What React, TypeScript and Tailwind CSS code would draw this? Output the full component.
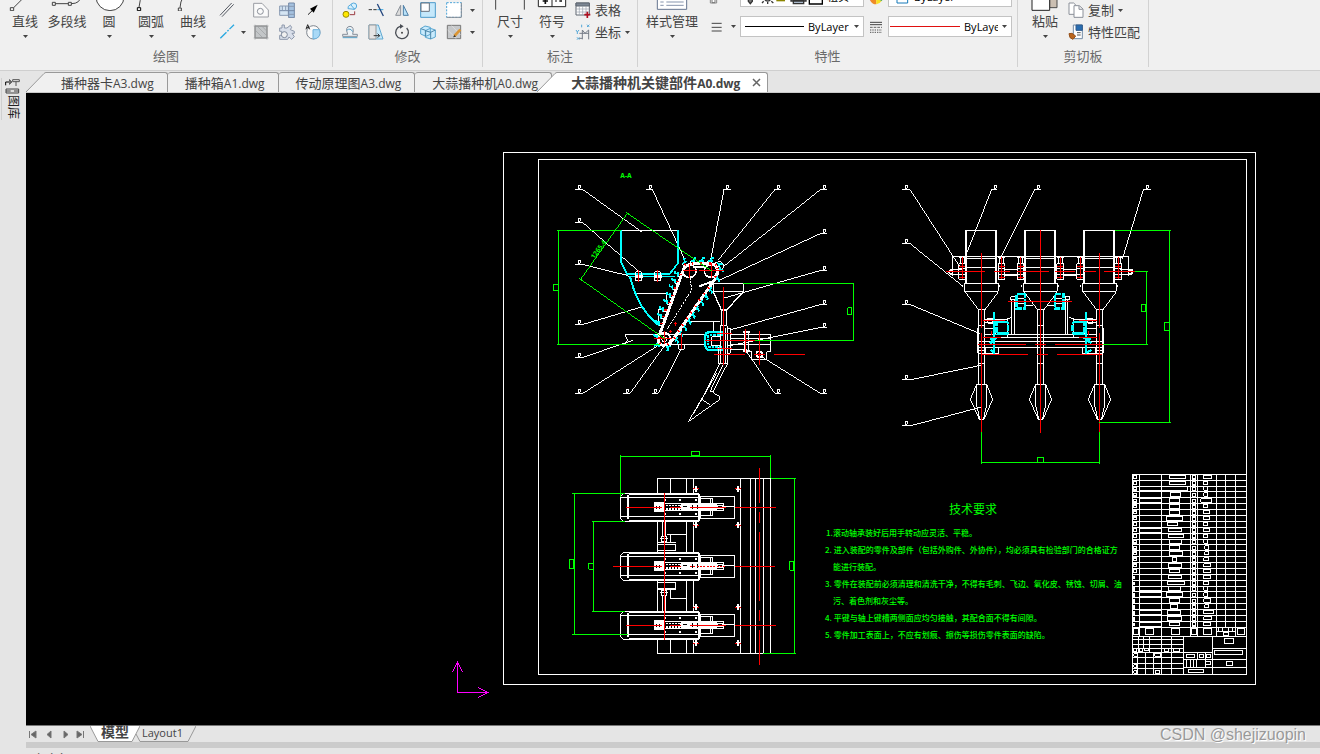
import React from 'react';

type Leader = [number, number, number, number, number];

const font = 'font-["Open_Sans","Noto_Sans_CJK_SC",sans-serif]';

function Caret() {
  return (
    <svg viewBox="0 0 5 3" className="h-[3px] w-[5px] shrink-0 fill-[#444]">
      <path d="M0 0H5L2.5 3Z" />
    </svg>
  );
}

function Icon({ children }: { children: React.ReactNode }) {
  return (
    <svg viewBox="0 0 48 48" className="h-4 w-4 shrink-0" fill="none" stroke="#5f6670" strokeWidth="3">
      {children}
    </svg>
  );
}

function IconButton({ label, children }: { label: string; children: React.ReactNode }) {
  return (
    <button aria-label={label} className="flex h-[22px] w-[26px] items-center justify-center">
      <Icon>{children}</Icon>
    </button>
  );
}

function LargeButton({ label, wide, children }: { label: string; wide?: boolean; children: React.ReactNode }) {
  return (
    <button className={`flex flex-col items-center pb-[9px] ${wide ? 'w-[68px]' : 'w-[42px]'}`}>
      <svg viewBox="0 0 96 96" className="h-8 w-8 shrink-0" fill="none" stroke="#444" strokeWidth="3">
        {children}
      </svg>
      <span className="mt-px whitespace-nowrap leading-[18px]">{label}</span>
      <span className="mt-[5px] flex h-[3px]">{label !== '多段线' && <Caret />}</span>
    </button>
  );
}

function TextButton({ label, caret, children }: { label: string; caret?: boolean; children: React.ReactNode }) {
  return (
    <button className="flex h-[22px] items-center whitespace-nowrap">
      <span className="mr-[2px] flex w-5 justify-center">
        <Icon>{children}</Icon>
      </span>
      <span className="leading-5">{label}</span>
      {caret && (
        <span className="ml-1 flex">
          <Caret />
        </span>
      )}
    </button>
  );
}

function MoreButton({ label }: { label: string }) {
  return (
    <button aria-label={label} className="flex h-[22px] w-[10px] items-center justify-center">
      <Caret />
    </button>
  );
}

function Group({ title, children }: { title: string; children: React.ReactNode }) {
  return (
    <section className="flex shrink-0 flex-col border-r border-[#d2d2d2]">
      <div className="flex h-[68px] items-end">{children}</div>
      <h2 className="h-5 text-center leading-[18px] text-[#6a6a6a]">{title}</h2>
    </section>
  );
}

function Combo({ label, value, children }: { label: string; value: string; children: React.ReactNode }) {
  return (
    <div className="flex h-[21px] w-[124px] items-center overflow-hidden border border-[#c3c3c3] bg-white pr-1">
      {children}
      <select aria-label={label} className="mr-1 min-w-0 flex-1 appearance-none overflow-hidden text-clip pt-px text-[11px] text-black">
        <option>{value}</option>
      </select>
      <Caret />
    </div>
  );
}

function Ribbon() {
  return (
    <header className="flex h-[71px] shrink-0 items-end overflow-hidden border-b border-[#cfcfcf] bg-[#f0f0f0] pb-[3px] text-[13px]">
      <Group title="绘图">
        <div className="flex pl-1">
          <LargeButton label="直线">
            <path d="M4 86h10v9H4ZM14 86L60 40" />
          </LargeButton>
          <LargeButton label="多段线">
            <path d="M4 70h9v9H4ZM52 70h9v9h-9ZM13 74H52M61 74Q88 74 90 50" />
          </LargeButton>
          <LargeButton label="圆">
            <circle cx="51" cy="53" r="42" fill="#fff" />
          </LargeButton>
          <LargeButton label="圆弧">
            <path d="M7 86h10v9H7Z" stroke="#000" />
            <path d="M12 85Q12 65 26 45" />
          </LargeButton>
          <LargeButton label="曲线">
            <path d="M4 87h9v9H4ZM9 86Q9 70 20 50" />
          </LargeButton>
        </div>
        <div className="flex pb-1 pr-[6px]">
          <div className="-mr-[2px] flex flex-col">
            <IconButton label="双线">
              <path d="M3 40L38 3M9 44L44 7" stroke="#555a63" strokeWidth="3" />
            </IconButton>
            <IconButton label="中心线">
              <path d="M4 43L45 2" stroke="#29a8e0" strokeWidth="4" strokeDasharray="26 4 5 4" />
            </IconButton>
          </div>
          <div className="flex items-end">
            <MoreButton label="更多线型" />
          </div>
          <div className="grid grid-cols-3">
            <IconButton label="局部视图">
              <path d="M2 4H27L46 24V45H2Z" fill="#fafafa" stroke="#9a9da3" />
              <circle cx="22" cy="28" r="9" stroke="#8b9099" />
            </IconButton>
            <IconButton label="轴">
              <path d="M2 12H28V40H2Z" fill="#d5e5f3" stroke="#8a9bb2" />
              <path d="M29 3H46V47H29ZM2 26H46" fill="#a5c2e0" stroke="#7488a5" />
              <path d="M10 12V26M20 12V26M29 13H46M29 37H46" stroke="#8a9bb2" />
            </IconButton>
            <IconButton label="箭头">
              <path d="M9 38L28 20" stroke="#222" />
              <path d="M38 8L15 20L26 32Z" fill="#000" stroke="none" />
            </IconButton>
            <IconButton label="剖面线">
              <path d="M6 6H42V42H6Z" fill="#c3c6c8" stroke="#777" />
              <path d="M6 18L30 42M12 6L42 36M26 6L42 22M2 6H47M6 2V47M42 2V47M2 42H47" stroke="#9a9da0" strokeWidth="2" />
            </IconButton>
            <IconButton label="齿轮">
              <path d="M2 12H9V3H16V12H24L34 4L38 10L34 17L46 22V28H39L46 38L38 46L30 39L26 46H2V34H8V22H2Z" fill="#d9dfea" stroke="#8d98ab" />
              <circle cx="16" cy="32" r="9" fill="#f0f0f0" stroke="#7f8a9d" />
            </IconButton>
            <IconButton label="局部放大">
              <circle cx="25" cy="25" r="20" fill="#fafafa" stroke="#7f868f" />
              <path d="M24 17H44Q50 44 24 45Z" fill="#a9d9f6" stroke="#6fb2dc" />
              <path d="M3 16L8 2L14 16M5 11H12" stroke="#222" />
            </IconButton>
          </div>
        </div>
      </Group>
      <Group title="修改">
        <div className="flex items-end pb-1 pl-1 pr-[5px]">
          <div className="grid grid-cols-5">
            <IconButton label="复制对象">
              <circle cx="35" cy="12" r="9" fill="#d8f0fc" stroke="#55aadd" />
              <path d="M18 20Q16 12 26 8L38 22Z" fill="#d8f0fc" stroke="#55aadd" />
              <circle cx="12" cy="37" r="9" fill="#ffe800" stroke="#9c8b00" />
              <path d="M24 38H38V28" stroke="#9b3b42" />
            </IconButton>
            <IconButton label="修剪">
              <path d="M2 23H12M16 23H26" stroke="#333" />
              <path d="M28 23H46" stroke="#36a5df" />
              <path d="M28 6L46 42" stroke="#23457d" strokeWidth="4" />
            </IconButton>
            <IconButton label="镜像">
              <path d="M20 10V40H5Z" fill="#ddd" stroke="#8b9199" />
              <path d="M28 10V40H43Z" fill="#b9e1f8" stroke="#4b7da5" />
            </IconButton>
            <IconButton label="缩放">
              <path d="M2 2H46V46H2Z" fill="#c5e8fb" stroke="#4c9bcb" />
              <path d="M3 3H28V28H3Z" fill="#fff" stroke="#68707c" />
            </IconButton>
            <IconButton label="打断">
              <path d="M2 2H46V46H2Z" fill="#fff" stroke="#4da4d8" strokeDasharray="6 4" />
              <path d="M46 2V46H2" stroke="#848b94" />
            </IconButton>
            <IconButton label="偏移">
              <path d="M2 31H17Q8 8 24 7Q38 8 32 31H46V37H2Z" fill="#eef4f8" stroke="#868e99" />
              <path d="M2 41H46M14 19Q25 10 32 23" stroke="#559dc4" />
            </IconButton>
            <IconButton label="拉伸">
              <path d="M3 3H31L45 45H3Z" fill="#c5e8fa" stroke="#62a9d1" />
              <path d="M3 3H24V45H3Z" fill="#e5e5e5" stroke="#999" />
              <path d="M17 35H35M29 29L35 35L29 41" stroke="#333" />
            </IconButton>
            <IconButton label="旋转">
              <path d="M18 7A19 19 0 1 0 38 12" stroke="#494d54" strokeWidth="4" />
              <path d="M18 0L29 7L18 14Z" fill="#494d54" stroke="none" />
              <circle cx="24" cy="26" r="3" fill="#444" stroke="none" />
            </IconButton>
            <IconButton label="阵列">
              <path d="M2 14L15 6L31 10V31L18 37L2 30ZM16 20L31 13L46 18V39L32 45L16 40Z" fill="#c9ebfd" stroke="#58a5cf" />
              <path d="M2 14L17 19V37M16 20L32 25V45M32 25L46 18" stroke="#4e86a8" />
            </IconButton>
            <IconButton label="编辑填充">
              <path d="M4 4H44V44H4Z" fill="#c6c8ca" stroke="#777" />
              <path d="M5 18L31 44M17 5L43 32" stroke="#ddd" />
              <path d="M25 36L43 17" stroke="#db9534" strokeWidth="8" />
              <path d="M21 40L25 33L30 38Z" fill="#333" stroke="none" />
            </IconButton>
          </div>
          <div className="flex flex-col">
            <MoreButton label="更多打断" />
            <MoreButton label="更多填充" />
          </div>
        </div>
      </Group>
      <Group title="标注">
        <div className="flex pl-[6px]">
          <LargeButton label="尺寸">
            <path d="M5 20V92M91 20V92M5 48H91" />
          </LargeButton>
          <LargeButton label="符号">
            <path d="M7 30H89V83H7ZM48 30V83" fill="#fff" stroke="#222" />
            <path d="M20 66H36M28 56V75M58 66H62M70 66H78M18 48H34M58 48H78" stroke="#111" strokeWidth="5" />
          </LargeButton>
        </div>
        <div className="flex flex-col pb-1 pr-[7px]">
          <TextButton label="表格">
            <path d="M3 3H43V39H3Z" fill="#fff" />
            <path d="M3 3H43V12H3Z" fill="#7d8794" />
            <path d="M3 21H43M3 30H43M13 12V39M23 12V39M33 12V39" stroke="#9aa2ae" strokeWidth="2" />
            <path d="M28 38H46M37 29V48" stroke="#b01020" strokeWidth="5" />
          </TextButton>
          <TextButton label="坐标" caret>
            <path d="M13 28H42M22 18V46M22 18L30 28L41 18V46M12 43H22" stroke="#777e89" />
            <path d="M3 18L7 24V30M7 24L12 18M6 40L13 47M13 40L6 47M20 2V10M36 2L43 9M43 2L36 9" stroke="#55a8d8" />
          </TextButton>
        </div>
      </Group>
      <Group title="特性">
        <LargeButton label="样式管理" wide>
          <path d="M4 10H92V91H4Z" fill="#fff" stroke="#64748f" />
          <path d="M13 69H23M31 69H83M13 79H23M31 79H83" stroke="#8795ad" />
        </LargeButton>
        <div className="flex items-end pb-[10px]">
          <div className="flex w-[34px] flex-col gap-[9px]">
            <button aria-label="图层管理" className="flex h-[21px] items-center pl-[3px] pt-1">
              <Icon>
                <path d="M4 10H23V36H4Z" fill="#fff" stroke="#888" />
                <path d="M9 24H18V35H9Z" stroke="#777" />
              </Icon>
            </button>
            <button aria-label="线宽" className="flex h-[21px] items-center justify-between pl-[3px] pr-1">
              <Icon>
                <path d="M8 13H38M8 25H38M8 36H38" stroke="#444" />
              </Icon>
              <Caret />
            </button>
          </div>
          <div className="flex flex-col gap-[9px]">
            <Combo label="图层" value="粗实">
              <svg viewBox="0 0 258 54" className="h-[18px] w-[86px] shrink-0" fill="none" stroke="#333" strokeWidth="4">
                <path d="M22 12H34V40L28 47L22 40Z" fill="#777" />
                <circle cx="80" cy="30" r="9" fill="#fff" />
                <path d="M80 42V48M68 40L63 45M91 40L97 45M65 30H58M94 30H101" />
                <path d="M106 20H132V40H106Z" fill="#8c8500" stroke="none" />
                <path d="M150 25H195V39H150ZM157 38H188V47H157Z" fill="#aab8ca" />
                <path d="M205 12H244V48H205Z" fill="#fff" stroke="#000" />
              </svg>
            </Combo>
            <Combo label="线宽样式" value="ByLayer">
              <svg viewBox="0 0 59 3" className="ml-1 mr-[4px] h-[3px] w-[59px] shrink-0" stroke="#000" shapeRendering="crispEdges">
                <path d="M0 1.5H59" />
              </svg>
            </Combo>
          </div>
          <div className="flex w-6 flex-col items-center gap-[9px]">
            <span className="flex h-[21px] items-center">
              <Icon>
                <path d="M24 24L6 12A20 20 0 0 0 7 35Z" fill="#e43a26" stroke="none" />
                <path d="M24 24L7 35A20 20 0 0 0 25 46Z" fill="#ef8b25" stroke="none" />
                <path d="M24 24L25 46A20 20 0 0 0 40 37Z" fill="#f9df23" stroke="none" />
                <path d="M24 24L40 37A20 20 0 0 0 45 18Z" fill="#63ad42" stroke="none" />
              </Icon>
            </span>
            <span className="flex h-[21px] items-center">
              <Icon>
                <path d="M6 10H42M6 17H42" stroke="#444" />
                <path d="M6 25H42" stroke="#666" strokeDasharray="8 3" />
                <path d="M6 33H42M6 40H42" stroke="#555" strokeDasharray="4 3" />
              </Icon>
            </span>
          </div>
          <div className="flex flex-col gap-[9px] pr-[5px]">
            <Combo label="颜色" value="ByLayer">
              <svg viewBox="0 0 75 54" className="h-[18px] w-[25px] shrink-0">
                <path d="M24 12H56V45H24Z" fill="#fff" stroke="#1478b8" strokeWidth="3" />
              </svg>
            </Combo>
            <Combo label="线型" value="ByLayer">
              <svg viewBox="0 0 70 3" className="ml-px mr-[4px] h-[3px] w-[70px] shrink-0" stroke="#e01010" shapeRendering="crispEdges">
                <path d="M0 1.5H70" />
              </svg>
            </Combo>
          </div>
        </div>
      </Group>
      <Group title="剪切板">
        <div className="flex pl-[6px]">
          <LargeButton label="粘贴">
            <path d="M62 20H84V86H62Z" fill="#cbbfb2" stroke="#4b4b4b" />
            <path d="M9 20H62V94H9Z" fill="#fff" stroke="#222" />
          </LargeButton>
        </div>
        <div className="flex flex-col pb-1 pr-2">
          <TextButton label="复制" caret>
            <path d="M3 3H17L25 11V37H3Z" fill="#fff" stroke="#8b9099" />
            <path d="M18 11H34L45 21V46H18ZM33 12V22H44" fill="#fff" stroke="#8b9099" />
          </TextButton>
          <TextButton label="特性匹配">
            <path d="M16 3H43V44H16Z" fill="#fff" stroke="#728ba5" />
            <path d="M24 3H43V19H24Z" fill="#286db1" stroke="#325c8c" />
            <path d="M27 26H38M27 33H38" stroke="#555" />
            <path d="M3 29L12 28L23 36L15 46L6 41Z" fill="#b9651e" stroke="#965018" />
          </TextButton>
        </div>
      </Group>
    </header>
  );
}

const tabs = ['播种器卡A3.dwg', '播种箱A1.dwg', '传动原理图A3.dwg', '大蒜播种机A0.dwg'];

function TabName({ name }: { name: string }) {
  const at = name.length - 6;
  return (
    <>
      {name.slice(0, at)}
      <span className="text-xs leading-none">{name.slice(at)}</span>
    </>
  );
}

function DocumentTabs() {
  return (
    <nav className="flex h-[22px] shrink-0 items-end overflow-hidden border-b border-[#cacaca] bg-[#e5e5e5] text-[13px] text-[#444]">
      <svg viewBox="0 0 20 20" className="h-5 w-5 shrink-0">
        <path d="M0 20L18 1.5Q19 .5 20 .5V20Z" fill="#f0f0f0" stroke="none" />
        <path d="M0 20L18 1.5Q19 .5 20 .5" fill="none" stroke="#999" />
      </svg>
      {tabs.map((tab, i) => (
        <button
          key={tab}
          className={`h-5 shrink-0 whitespace-nowrap rounded-tr-[3px] border-r border-t border-[#999] bg-[#f0f0f0] pr-[13px] leading-[18px] ${i === 0 ? 'pl-[15px]' : 'rounded-tl-[3px] pl-[17px]'}`}
        >
          <TabName name={tab} />
        </button>
      ))}
      <svg viewBox="0 0 20 20" className="relative -ml-[15px] h-5 w-5 shrink-0">
        <path d="M0 20L18 1.5Q19 .5 20 .5V20Z" fill="#fff" stroke="none" />
        <path d="M0 20L18 1.5Q19 .5 20 .5" fill="none" stroke="#999" />
      </svg>
      <div className="flex h-5 shrink-0 items-center whitespace-nowrap rounded-tr-[3px] border-r border-t border-[#999] bg-white pl-[14px] pr-[6px] font-bold">
        <button className="text-sm leading-[18px]">
          <TabName name="大蒜播种机关键部件A0.dwg" />
        </button>
        <button aria-label="关闭" className="ml-3">
          <svg viewBox="0 0 9 9" className="h-[9px] w-[9px]" stroke="#666" strokeWidth="1.5">
            <path d="M1 1L8 8M8 1L1 8" />
          </svg>
        </button>
      </div>
    </nav>
  );
}

const sideLeaders: Leader[] = [
  [76, 88, 98, 277, 217], [76, 186, 98, 265, 333], [76, 313, 98, 235, 347], [76, 492, 98, 275, 441],
  [76, 592, 98, 248, 541], [76, 700, 98, 322, 558], [220, 700, 240, 340, 562], [305, 700, 325, 392, 570],
  [289, 88, 307, 405, 300], [542, 88, 522, 481, 305], [694, 88, 675, 505, 300], [830, 88, 812, 520, 320],
  [830, 220, 812, 510, 360], [830, 330, 812, 520, 415], [830, 433, 812, 540, 510], [830, 502, 812, 535, 558],
  [694, 700, 675, 590, 575], [830, 700, 812, 635, 590],
];

const frontLeaders: Leader[] = [
  [37, 58, 60, 208, 288], [37, 220, 60, 220, 350], [37, 403, 60, 270, 491], [37, 628, 65, 272, 586],
  [37, 766, 65, 275, 711], [322, 58, 305, 228, 255], [452, 58, 435, 328, 270], [782, 58, 760, 697, 268],
];

// Keeps the small number frames on the drawing's grid so their sides stay sharp
const snap = (v: number) => Math.round((v - 1.5) / 3) * 3 + 1.5;

function Leaders({ items }: { items: Leader[] }) {
  return (
    <g>
      {items.map(([x, y, turn, tx, ty]) => {
        const left = snap(Math.min(x, turn) + 8);
        const base = snap(y);
        return (
          <path key={`${x}-${y}`} d={`M${x} ${base}H${turn}L${tx} ${ty}M${left} ${base - 3}V${base - 12}H${left + 6}V${base - 3}Z`} />
        );
      })}
    </g>
  );
}

// Cleats of the elevator belt: x, y, rotation
const cleats = [
  [325, 488, 0], [332, 468, 0], [338, 448, 0], [350, 425, 0], [358, 405, 0], [366, 382, 0], [374, 362, 0], [382, 342, 0],
  [403, 305, 60], [430, 301, 90], [455, 301, 90], [482, 302, 90], [507, 312, 150],
  [512, 328, 180], [503, 355, 200], [482, 390, 210], [469, 408, 210], [456, 426, 210], [443, 445, 210], [430, 464, 210],
  [418, 482, 210], [405, 501, 210], [393, 519, 210], [380, 540, 210], [355, 562, 250], [322, 555, 320], [320, 530, 0],
];

function SideView() {
  return (
    <g transform="translate(550 160) scale(.33333)" strokeWidth="3" stroke="#fff">
      <Leaders items={sideLeaders} />
      <path d="M213 211H385M262 400H350V430M235 349H375M325 490V448H340M225 523H462M225 523L232 540L225 553M215 553H465M418 485H510M490 485V512" />
      <g stroke="#0ff">
        <path d="M213 211V305L232 343H358L385 308V211" strokeWidth="5" />
        <path d="M238 349H375" />
        <path d="M240 350Q258 420 288 457T330 497" strokeWidth="6" />
        <path d="M520 517H476Q466 517 466 530V558Q468 570 480 570H520" strokeWidth="7" />
        <path d="M520 525H480Q474 525 474 533V555Q474 562 482 562H520" strokeWidth="6" strokeDasharray="8 3" />
      </g>
      <path d="M330 520L398 335Q406 312 430 312H485Q510 318 500 350L368 540Q355 558 335 555Q318 548 330 520Z" strokeWidth="9" />
      <path d="M418 333L425 390L350 510" strokeDasharray="7 3" />
      <path d="M430 322H470M446 380L490 363" strokeWidth="6" />
      <circle cx="418" cy="333" r="20" strokeWidth="5" />
      <circle cx="482" cy="333" r="19" strokeWidth="5" />
      <circle cx="343" cy="538" r="19" strokeWidth="6" />
      <circle cx="343" cy="538" r="8" />
      <circle cx="508" cy="318" r="13" />
      {cleats.map(([x, y, r]) => (
        <g key={`${x}-${y}`} transform={`translate(${x} ${y}) rotate(${r})`}>
          <path d="M-9 -4L2 0M-7 -9V-2M2 -6V8" stroke="#0ff" strokeWidth="5" />
          <path d="M2 8H10" />
          <path d="M5 2H13" stroke="#f00" strokeWidth="4" />
        </g>
      ))}
      <path d="M490 371H580V395H490Z" />
      <path d="M490 395L514 450V497M580 395L530 450V497M512 450H532" strokeWidth="4" />
      <path d="M511 497H532V612H505V560M511 497V612M526 505V612M532 505H541V580H532M513 530H485V558H513" />
      <path d="M508 612L460 708L415 785M500 640L430 762M532 612L488 697L510 710V718L415 785M520 612L480 695H490M455 718L480 735" />
      <path d="M541 523H662V575H650V598H605V575H598M541 535H662M541 553H662M541 570H590M585 515H595V577H585Z" />
      <path d="M579 515H600M579 572H600" strokeWidth="6" />
      <circle cx="628" cy="583" r="9" strokeWidth="5" />
      <path d="M258 335H274V362H258ZM315 335H331V362H315ZM386 553H403V568H386Z" />
      <path d="M254 349H278M311 349H335" strokeWidth="8" />
      <g stroke="#f00">
        <path d="M520 380V615M465 541H620M492 583H585M612 583H645M672 583H765M587 507V580M628 513V615M418 312V354M398 333H440M447 333H522M484 310V355M312 535H365M343 512V552M394 520V568M266 330V366M323 330V366M500 520H546M500 565H546" />
        <path d="M371 492H382M376 487V497M356 515H367M361 510V520" />
      </g>
      <g stroke="#0f0">
        <path d="M22 211H213M25 211V553M22 553H330M10 373H25V391H10ZM580 370H913M910 370V541M615 541H913M893 443H906V465H893Z" />
        <path d="M228 158L236 162M232 160L92 358M232 160L485 333M92 358L345 537M88 356L96 361" />
      </g>
      <text transform="translate(133 298) rotate(-55)" fill="#0f0" stroke="none" className='font-["Noto_Sans",sans-serif] text-[20px] font-bold'>1265.4</text>
      <text x="211" y="54" fill="#0f0" stroke="none" className='font-["Noto_Sans",sans-serif] text-[20px] font-bold'>A-A</text>
    </g>
  );
}

function FrontView() {
  return (
    <g transform="translate(890 170) scale(.33333)" strokeWidth="3" stroke="#fff">
      <Leaders items={frontLeaders} />
      <path d="M187 318V260H228M320 260H404M497 260H582M675 260H716V318M187 298H215M187 313H208M690 298H727V313H690" />
      <path d="M187 297L175 306L187 315M716 297L728 306L716 315" strokeWidth="5" />
      <path d="M345 298H383M345 313H383M522 298H562M522 313H562M345 318H383M522 318H562" />
      {[217, 335, 392, 511, 571, 685].map((x) => (
        <g key={x}>
          <path d={`M${x - 11} 262H${x + 11}M${x - 6} 262V280M${x + 6} 262V280M${x - 10} 281H${x + 10}V328H${x - 10}ZM${x - 10} 297H${x + 10}M${x - 10} 313H${x + 10}`} />
          <path d={`M${x} 262V328M${x - 9} 289H${x + 9}M${x - 9} 322H${x + 9}`} stroke="#f00" />
        </g>
      ))}
      {[0, 177, 354].map((x) => (
        <g key={x} transform={`translate(${x} 0)`}>
          <path d="M228 181V340M319 181V340" strokeWidth="6" />
          <path d="M228 181H320M228 260H320M228 265H320M228 292H320M223 340H325V364H223ZM219 345V352M329 345V352M226 366L266 420H284L325 366" />
          <path d="M266 420V643M284 420V643M266 466H284M266 580H284M260 643H290M260 643V705L270 750H280L290 705V643M260 643L241 688L268 748M290 643L308 688L282 748" />
        </g>
      ))}
      <path d="M263 475V550H284M640 475V550H618M263 514H640M263 532H640M284 493H620M300 502H605M266 541H284M620 541H638" />
      <path d="M366 388V493M374 388V493M362 380H377V390H362ZM527 388V493M533 388V493M526 380H540V390H526ZM406 407H428M474 407H494M385 387H403M385 402H403M498 387H517M498 402H517" />
      <path d="M284 448H352L366 440M284 458H318M284 475H318V493M536 440L550 448H620M620 458H585M620 475H585V493M286 533H326V550H286ZM577 533H617V550H577ZM294 445H308V460H294ZM594 445H608V460H594ZM352 445V502M551 445V502" />
      <g stroke="#0ff" strokeWidth="7">
        <path d="M380 372H406V416H380ZM495 372H521V416H495Z" strokeDasharray="18 2" />
        <path d="M320 456H350Q355 458 355 464V485Q354 491 348 491H320ZM583 456H553Q548 458 548 464V485Q549 491 555 491H583Z" strokeDasharray="18 2" />
        <path d="M313 427V553M589 427V553M300 508H313L300 520M604 508H589L604 520M302 540L313 548M604 540L589 548" strokeDasharray="16 2" />
      </g>
      <path
        d="M274 250V475M274 490V787M451 181V790M628 250V475M628 490V787M168 304H285M312 304H360M380 304H476M495 304H555M583 304H617M641 304H735M355 394H545M280 451H345M568 451H622M263 523H407M435 523H467M495 523H640M274 553H413M442 553H473M501 553H635M280 502H332M568 502H622M306 484V496M596 484V496"
        stroke="#f00"
      />
      <path
        d="M675 181H842M838 181V757M628 757H842M823 457H838V481H823ZM735 304H773M769 304V523M640 523H773M754 403H768V425H754ZM274 787V882M628 787V882M274 877H628M442 862H461V877H442Z"
        stroke="#0f0"
      />
    </g>
  );
}

function TopView() {
  return (
    <g transform="translate(560 440) scale(.33333)" strokeWidth="3" stroke="#fff">
      <path d="M292 115H632V640H292M292 115V640M379 115V640M400 115V640M541 115V640M571 115V640M586 115V640M610 115V640M331 115V160M331 598V640" />
      <path d="M308 245V290M316 245V290M304 290H320V304H304ZM300 297H324M292 308H348M292 314H347V332H292ZM320 283H379M331 283V306" />
      <path d="M292 427H347V448H292M292 445H347M304 452H320V466H304ZM300 458H324M331 448V475H379M308 466V512M316 466V512" />
      {[0, 177, 354].map((y) => (
        <g key={y} transform={`translate(0 ${y})`}>
          <path d="M190 160H414L421 167V238L414 244H190L182 237V168Z" fill="#000" />
          <path d="M205 166V238M207 162H416M418 165V240M207 242H416" strokeWidth="6" />
          <path d="M182 172H421M182 229H421M421 169H524V236H421M421 176H458V227H421M451 176V227M310 190H475M310 213H475M492 201H524" />
          <path d="M285 187H310V215H285ZM363 195H472V208H363Z" fill="#fff" />
          <path d="M460 190H492V212H460Z" />
          <path d="M466 196H487V206H466Z" fill="#fff" />
          <path d="M290 197V207M299 197V207M368 200H380M398 196V208M412 196V208M474 200H487" stroke="#000" />
          <path d="M318 197H362M318 208H362" strokeWidth="5" strokeDasharray="5 4" />
          <path d="M357 180H363M405 180H411M357 222H363M405 222H411M312 180H318M312 222H318" strokeWidth="6" />
        </g>
      ))}
      {[147, 256, 502, 610].map((y) =>
        [408, 534].map((x) => (
          <g key={`${x}-${y}`}>
            <path d={`M${x} ${y - 9}V${y + 9}M${x - 5} ${y}H${x + 5}`} strokeWidth="7" />
            <path d={`M${x - 9} ${y}H${x - 4}M${x + 4} ${y}H${x + 9}`} stroke="#f00" />
          </g>
        )),
      )}
      <path
        d="M198 202H305M330 202H363M390 202H498M524 202H648M159 379H305M330 379H363M524 379H645M198 556H305M330 556H363M390 556H498M524 556H648M313 160V600M598 85V188M598 216V248M598 277V483M598 510V542M598 571V675"
        stroke="#f00"
      />
      <path d="M390 379H498" stroke="#f00" strokeDasharray="6 4" />
      <path
        d="M182 45V172M632 45V115M182 49H632M394 34H419V47H394ZM37 160H195M37 583H203M43 160V583M28 358H41V385H28ZM97 244H195M97 514H195M100 244V514M86 370H100V388H86ZM632 115H707M703 115V640M610 640H707M689 364H702V391H689Z"
        stroke="#0f0"
      />
    </g>
  );
}

// Placeholder text boxes of the parts list, one entry per row: name left/right, material left/right
const parts = [
  [148, 197, 252, 275], [148, 197, 252, 264], [125, 203, 252, 264], [151, 182, 252, 264], [148, 180, 243, 275],
  [148, 180, 250, 264], [148, 180, 250, 269], [139, 188, 250, 269], [142, 173, 252, 264], [145, 185, 250, 269],
  [145, 191, 252, 264], [148, 185, 252, 264], [148, 180, 255, 266], [148, 188, 255, 266], [157, 170, 252, 266],
  [145, 185, 252, 272], [148, 180, 252, 272], [145, 185, 250, 272], [142, 194, 252, 266], [145, 182, 252, 264],
  [139, 188, 252, 264], [148, 180, 252, 272], [151, 173, 255, 266], [142, 182, 250, 281], [142, 185, 252, 275],
  [148, 180, 252, 272],
];
const longCodes = [2, 4, 9, 19, 20, 23, 25];

function TitleBlock() {
  return (
    <g transform="translate(1120 465) scale(.33333)" strokeWidth="3" stroke="#fff">
      <path d="M37 28H380M37 28V628M58 28V513M125 28V513M211 28V513M233 28V513M289 28V487M316 28V487M346 28V487M380 28V628" />
      {parts.map(([a, b, c, d], i) => {
        const y = 28 + Math.round(i * 17.65);
        return (
          <g key={i}>
            <path d={`M37 ${y + 18}H380M${a} ${y + 3}H${b}V${y + 14}H${a}ZM${c} ${y + 3}H${d}V${y + 13}H${c}Z`} />
            <path d={i < 17 ? `M41 ${y + 4}H49V${y + 12}H41Z` : `M42 ${y + 4}V${y + 15}`} strokeWidth="4" />
            <path d={`M218 ${y + 4}H226V${y + 14}H218Z`} strokeWidth="4" />
            {longCodes.includes(i) && <path d={`M59 ${y + 3}H125V${y + 15}H59Z`} />}
          </g>
        );
      })}
      <path d="M40 490H56V509H40ZM77 490H101V509H77ZM154 492H179V509H154ZM214 490H230V509H214ZM250 492H275V509H250ZM352 490H374V509H352ZM289 487V513M346 487V513M289 499H346M297 487V499M308 487V499M325 487V499M337 487V499M310 502H326V511H310Z" />
      <path d="M37 514H380M191 514V628M278 514V628M37 523H191M37 538H191M37 550H191M37 562H278M56 514V562M70 514V550M88 514V562M125 514V628M154 514V628M37 578H191M37 595H191M37 612H191M53 562V628M77 562V628M101 562V628" />
      <path d="M40 552H50V559H40ZM58 552H68V559H58ZM73 550H86V557H73ZM133 552H146V559H133ZM160 552H179V559H160ZM104 565H122V574H104ZM41 566H52V574H41ZM41 599H50V607H41ZM41 617H50V625H41ZM106 616H120V625H106Z" />
      <path d="M191 583H380M191 607H380M278 550H380M234 562V583M256 562V607M199 583V607M211 583V607M220 583V607M229 583V607M199 568H224V578H199ZM238 568H252V578H238ZM259 568H272V578H259ZM258 589H272V598H258ZM205 613H251V623H205ZM313 522H341V536H313ZM283 556H368V569H283ZM319 589H338V602H319Z" />
    </g>
  );
}

const notes = [
  { x: 826, text: '1.滚动轴承装好后用手转动应灵活、平稳。' },
  { x: 825, text: '2. 进入装配的零件及部件（包括外购件、外协件），均必须具有检验部门的合格证方' },
  { x: 833, text: '能进行装配。' },
  { x: 825, text: '3. 零件在装配前必须清理和清洗干净，不得有毛刺、飞边、氧化皮、锈蚀、切屑、油' },
  { x: 833, text: '污、着色剂和灰尘等。' },
  { x: 825, text: '4. 平键与轴上键槽两侧面应均匀接触，其配合面不得有间隙。' },
  { x: 825, text: '5. 零件加工表面上，不应有划痕、擦伤等损伤零件表面的缺陷。' },
];

function Drawing() {
  return (
    <main className="min-h-0 flex-1 bg-black">
      <svg viewBox="26 93 1294 632" preserveAspectRatio="xMinYMin meet" className="block h-full w-full" fill="none" shapeRendering="crispEdges">
        <path d="M503.5 152.5H1255.5V684.5H503.5ZM538.5 159.5H1246.5V674.5H538.5Z" stroke="#fff" />
        <SideView />
        <FrontView />
        <TopView />
        <TitleBlock />
        <g fill="#0f0" className='font-["Noto_Sans_CJK_SC",sans-serif] text-[8px] font-medium'>
          <text x="949" y="514" className="text-[12px] font-normal">技术要求</text>
          {notes.map((note, i) => (
            <text key={note.text} x={note.x} y={536 + i * 17}>{note.text}</text>
          ))}
        </g>
        <path d="M457.5 662V692.5H488M452.5 672L457.5 662L462.5 672M478 687.5L488 692.5L478 697.5" stroke="#f0f" />
      </svg>
    </main>
  );
}

function SheetTabs() {
  return (
    <nav className="flex h-[17px] shrink-0 items-start border-t border-[#777] bg-[#e5e5e5] text-[#444]">
      {[
        { label: '第一页', d: 'M3.5 1V8M10 1V8L5 4.5Z' },
        { label: '上一页', d: 'M9 1V8L5 4.5Z' },
        { label: '下一页', d: 'M6 1V8L10 4.5Z' },
        { label: '最后一页', d: 'M3 1V8L8 4.5ZM9.5 1V8' },
      ].map((item) => (
        <button key={item.label} aria-label={item.label} className="flex h-4 w-4 items-center">
          <svg viewBox="0 0 13 9" className="h-[9px] w-[13px]" fill="#666" stroke="#777" strokeWidth="1">
            <path d={item.d} />
          </svg>
        </button>
      ))}
      <button className="flex h-4 font-bold">
        <svg viewBox="0 0 8 16" className="h-4 w-2">
          <path d="M0 0L8 15.5V0Z" fill="#fff" />
          <path d="M0 0L8 15.5" stroke="#999" />
        </svg>
        <span className="h-4 border-b border-[#999] bg-white px-[3px] text-sm leading-[12px]">模型</span>
        <svg viewBox="0 0 8 16" className="h-4 w-2">
          <path d="M8 0L0 15.5V0Z" fill="#fff" />
          <path d="M8 0L0 15.5M4 8L8 15.5" fill="none" stroke="#999" />
        </svg>
      </button>
      <button className="flex h-4">
        <span className="h-4 border-b border-[#999] pl-[2px] pr-[5px] text-[11px] leading-[14px]">Layout1</span>
        <svg viewBox="0 0 8 16" className="h-4 w-2">
          <path d="M8 0L0 15.5" stroke="#999" />
        </svg>
      </button>
    </nav>
  );
}

export default function App() {
  return (
    <div className={`relative flex h-screen flex-col overflow-hidden bg-[#e5e5e5] text-[#444] ${font}`}>
      <Ribbon />
      <div className="flex min-h-0 flex-1">
        <aside className="flex w-[26px] shrink-0 items-start pt-[7px]">
          <button className="ml-px flex h-[42px] flex-col items-center border-l border-[#cfcfcf] pl-[3px] text-[#222]">
            <svg viewBox="0 0 45 48" className="h-4 w-[15px] shrink-0" fill="none" stroke="#222" strokeWidth="3">
              <path d="M2 22V12H16M12 5L20 12L12 19" stroke="#000" />
              <path d="M23 5H43V11H23ZM33 11V24" stroke="#555" />
              <path d="M3 33H41V45H3ZM3 39H17M27 39H41" fill="#ddd" stroke="#444" />
            </svg>
            <span className="mt-px text-xs leading-[14px] [text-orientation:sideways] [writing-mode:vertical-rl]">图库</span>
          </button>
        </aside>
        <div className="flex min-w-0 flex-1 flex-col">
          <DocumentTabs />
          <Drawing />
          <SheetTabs />
          <div className="h-[6px] shrink-0 bg-[#cbcbcb]" />
          <footer className="h-[6px] shrink-0 overflow-hidden pl-[6px] pt-[2px] text-[13px] leading-[18px]">命令行</footer>
        </div>
      </div>
      <p className='absolute bottom-2 right-[14px] font-["Liberation_Sans",sans-serif] text-base leading-[22px] text-[#999] [text-shadow:1px_1px_0_#fff]'>
        CSDN @shejizuopin
      </p>
    </div>
  );
}
